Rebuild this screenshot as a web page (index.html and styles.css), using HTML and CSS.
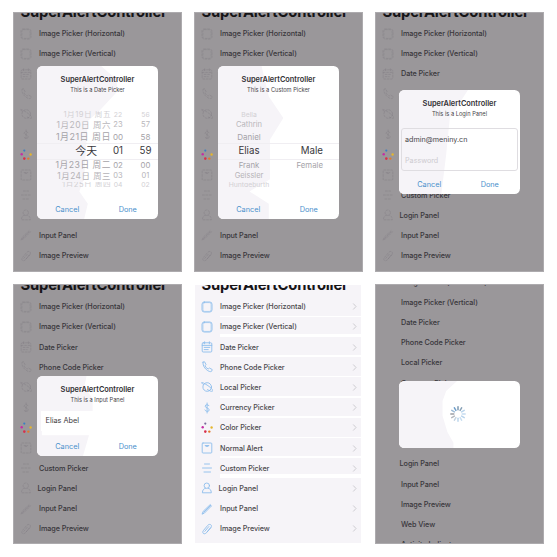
FILE: index.html
```
<!DOCTYPE html>
<html lang="en">
<head>
<meta charset="utf-8">
<title>SuperAlertController</title>
<link rel="stylesheet" href="styles.css">
</head>
<body>
<svg class="defs" aria-hidden="true">
  <symbol id="square" viewBox="0 0 12 12"><rect x="1" y="1" width="10" height="10" rx="2.2"/><rect x="2" y="1.600" width="8" height="8.800" rx="1.600" opacity=".6"/></symbol>
  <symbol id="calendar" viewBox="0 0 12 12"><rect x="1.2" y="1.8" width="9.6" height="9.2" rx="1"/><path d="M1.2 4.4h9.6M3.6.8v2M8.4.8v2M3.2 6.4h5.6M3.2 8.6h4"/></symbol>
  <symbol id="phone" viewBox="0 0 12 12"><path d="M2 1.2 3.6.8 5 3.6 4 4.8C4.600 6.300 5.700 7.400 7.200 8L8.400 7l2.800 1.500-.5 1.700C9 12.200 1 7 2 1.200Z"/></symbol>
  <symbol id="planet" viewBox="0 0 12 12"><circle cx="6.200" cy="6" r="4.300"/><path d="M2.500 3.800C-.5 1.200 0 .6 4 2.800S13.500 9.500 11.300 10.300C10.300 10.600 8.500 9.800 6.500 8.600"/></symbol>
  <symbol id="dollar" viewBox="0 0 12 12"><path d="M8 3.700C7.500 2.300 4.200 2.200 4.200 4.200S8.200 5.800 8.200 7.900 4.500 9.800 3.900 8M6.100 1v10"/></symbol>
  <symbol id="colors" viewBox="0 0 12 12"><g stroke="none"><circle class="dot-top" cx="4.300" cy="1.600" r="1.100"/><circle cx="1.700" cy="5.300" r="1.200" fill="#c52da4"/><circle cx="4.300" cy="9.600" r="1.300" fill="#d8304c"/><circle cx="8.300" cy="9.600" r="1.200" fill="#e07a2c"/><circle cx="10.600" cy="5.500" r="1.200" fill="#e5b52c"/></g></symbol>
  <symbol id="note" viewBox="0 0 12 12"><rect x="1.200" y="1" width="9.600" height="10" rx=".8"/><path d="M4.200 3.500h3.600M5 4.400h2"/></symbol>
  <symbol id="lines" viewBox="0 0 12 12"><path d="M3.500 2h5M1.500 6h9M3 10h6.500"/></symbol>
  <symbol id="person" viewBox="0 0 12 12"><circle cx="5.800" cy="3.700" r="2.700"/><path d="M4.500 6.200C2.500 6.800 1.500 8 1.400 10.800h8.900C10.200 8 9.200 6.800 7.200 6.200"/></symbol>
  <symbol id="pencil" viewBox="0 0 12 12"><path d="M1.200 10.800 2.200 8.300 9.200 1.600 10.500 2.900 3.700 9.800ZM2.800 9.200 9.700 2.300"/></symbol>
  <symbol id="clip" viewBox="0 0 12 12"><path d="M9.800 4.700 5.600 9.600C3.200 12.300.4 9.900 2.600 7.300L6.800 2.300C8.700.2 11.700 2.100 9.900 4.400L6 9M3.800 8.300 7.800 3.600"/></symbol>
  <symbol id="globe" viewBox="0 0 12 12"><circle cx="6" cy="6" r="4.800"/></symbol>
</svg>

<main class="gallery">
  <section class="screen dim">
    <h1 class="heading">SuperAlertController</h1>
    <div class="list" data-covered="2-9"></div>
    <div class="alert alert-picker shape-a">
      <h2>SuperAlertController</h2>
      <p class="sub">This is a Date Picker</p>
      <div class="wheel wheel-date">
        <div class="w0"><span>1月19日 周五</span><span>22</span><span>56</span></div>
        <div class="w1"><span>1月20日 周六</span><span>23</span><span>57</span></div>
        <div class="w2"><span>1月21日 周日</span><span>00</span><span>58</span></div>
        <div class="w3"><span>今天</span><span>01</span><span>59</span></div>
        <div class="w4"><span>1月23日 周二</span><span>02</span><span>00</span></div>
        <div class="w5"><span>1月24日 周三</span><span>03</span><span>01</span></div>
        <div class="w6"><span>1月25日 周四</span><span>04</span><span>02</span></div>
      </div>
      <div class="actions"><span>Cancel</span><span>Done</span></div>
    </div>
  </section>

  <section class="screen dim">
    <h1 class="heading">SuperAlertController</h1>
    <div class="list" data-covered="2-9"></div>
    <div class="alert alert-picker shape-b">
      <h2>SuperAlertController</h2>
      <p class="sub">This is a Custom Picker</p>
      <div class="wheel wheel-names">
        <div class="w0"><span>Bella</span></div>
        <div class="w1"><span>Cathrin</span></div>
        <div class="w2"><span>Daniel</span></div>
        <div class="w3"><span>Elias</span><span>Male</span></div>
        <div class="w4"><span>Frank</span><span>Female</span></div>
        <div class="w5"><span>Geissler</span></div>
        <div class="w6"><span>Huntgeburth</span></div>
      </div>
      <div class="actions"><span>Cancel</span><span>Done</span></div>
    </div>
  </section>

  <section class="screen dim">
    <h1 class="heading">SuperAlertController</h1>
    <div class="list" data-covered="3-7"></div>
    <div class="alert alert-login shape-c">
      <h2>SuperAlertController</h2>
      <p class="sub">This is a Login Panel</p>
      <div class="fields"><div>admin@meniny.cn</div><div class="placeholder">Password</div></div>
      <div class="actions"><span>Cancel</span><span>Done</span></div>
    </div>
  </section>

  <section class="screen dim lower">
    <h1 class="heading">SuperAlertController</h1>
    <div class="list" data-covered="4-7"></div>
    <div class="alert alert-input shape-d">
      <h2>SuperAlertController</h2>
      <p class="sub">This is a Input Panel</p>
      <div class="field">Elias Abel</div>
      <div class="actions"><span>Cancel</span><span>Done</span></div>
    </div>
  </section>

  <section class="screen plain lower">
    <h1 class="heading">SuperAlertController</h1>
    <div class="list"></div>
  </section>

  <section class="screen dim scrolled">
    <div class="list" data-covered="6-8"></div>
    <div class="alert alert-loading shape-e">
      <svg class="spinner" viewBox="-10 -10 20 20"></svg>
    </div>
  </section>
</main>
<script src="app.js"></script>
</body>
</html>
```

FILE: styles.css
```
* { box-sizing: border-box; margin: 0; padding: 0; }
body {
  width: 557px; height: 557px; overflow: hidden; background: #fff;
  font-family: Inter, "Noto Sans CJK SC", sans-serif; color: #3c3a3e;
}
.defs { position: absolute; width: 0; height: 0; }
.gallery {
  display: grid; grid-template-columns: repeat(3, 169px); grid-template-rows: repeat(2, 260px);
  gap: 12px; padding: 12px 0 0 13px;
}
.screen { position: relative; overflow: hidden; display: flex; flex-direction: column; }
.dim { --dot: #3b7fc4; background: #9a979a; border: 1px solid #adabae; }
.plain { --dot: #77699a; background: #f6f4f8; border: solid #fff; border-width: 1px 2px 1px 1px; }

.heading {
  height: 11.5px; flex: none; padding-left: 6.5px; margin-top: -1px;
  font-size: 14.8px; line-height: 0; font-weight: 700; letter-spacing: -0.2px;
  white-space: nowrap; color: #161517;
}
.lower .heading { height: 12.6px; padding-top: 1.3px; }
.scrolled .list { margin-top: -12.9px; }

.row {
  display: flex; align-items: center; flex: none; height: 20.2px; padding: 0 6px;
  font-size: 7.25px; font-weight: 500; letter-spacing: -0.08px; white-space: nowrap; color: #38363a;
}
.row svg { width: 12px; height: 12px; flex: none; fill: none; stroke-linecap: round; stroke-linejoin: round; }
.row .label { margin-left: 7px; flex: 1; }
.row.login .label { margin-left: 5.6px; }
.row .chevron { display: none; }
.dim .row svg { stroke: #7d7a80; stroke-width: 0.4; stroke-dasharray: 1.8 1.6; }
.dot-top { fill: var(--dot); }
.plain .row { padding: 0 4px 0 6px; color: #4c4a4e; position: relative; }
.plain .row .icon { stroke: #8dbdec; stroke-width: 0.9; }
.plain .row .chevron { display: block; width: 5px; height: 7px; stroke: #c3c1c7; stroke-width: 0.8; }
.plain .row::after {
  content: ""; position: absolute; left: 25px; right: 0; bottom: 0;
  height: var(--rule, 1px); background: #fff;
}
.scrolled .icon { visibility: hidden; }

.alert {
  position: absolute; left: 23px; width: 121px; border-radius: 5.5px;
  background: #fff; overflow: hidden; display: flex; flex-direction: column; isolation: isolate;
}
.alert::before { content: ""; position: absolute; inset: 0; z-index: -1; background: #f6f4f8; }
.alert-picker { top: 53px; height: 153px; }
.alert-login { top: 77px; height: 104px; }
.alert-input { top: 91px; height: 80px; }
.alert-loading { top: 96px; height: 67px; align-items: center; justify-content: center; }
.shape-a::before { clip-path: polygon(0 0, 53% 0, 66% 9%, 66% 17%, 52% 29%, 42% 36%, 39% 73%, 35% 82%, 42% 90%, 39% 100%, 0 100%); }
.shape-b::before { clip-path: polygon(0 0, 36% 0, 42% 20%, 54% 34%, 43% 48%, 43% 74%, 26% 82%, 42% 90%, 42% 100%, 0 100%); }
.shape-c::before { clip-path: polygon(0 0, 57% 0, 42% 27%, 39% 62%, 35% 100%, 0 100%); }
.shape-d::before { clip-path: polygon(0 0, 41% 0, 39% 14%, 46% 28%, 46% 44%, 4% 44%, 4% 74%, 43% 74%, 38% 100%, 0 100%); }
.shape-e::before { clip-path: polygon(0 0, 48% 0, 39% 15%, 36% 30%, 36% 52%, 40% 76%, 45% 92%, 45% 100%, 0 100%); }

.alert h2 {
  margin-top: 9px; font-size: 7.4px; line-height: 10px; font-weight: 600;
  text-align: center; color: #343236; white-space: nowrap;
}
.sub { font-size: 5.7px; line-height: 9px; text-align: center; color: #48464a; white-space: nowrap; }
.actions {
  display: grid; grid-template-columns: 1fr 1fr; margin-top: auto; height: 19px; line-height: 19px;
  font-size: 7.3px; text-align: center; color: #4a90cc;
}

.wheel { margin-top: 17px; white-space: nowrap; }
.wheel > div { display: grid; overflow: hidden; align-items: center; }
.wheel-date > div { grid-template-columns: 74px 14px 33px; }
.wheel-date span { text-align: center; }
.wheel-date span:last-child { padding-left: 8px; }
.wheel-date span:first-child { text-align: right; font-size: 1.12em; letter-spacing: 0.5px; }
.wheel-date .w3 span:first-child { padding-right: 14px; letter-spacing: 0; }
.wheel-names > div { grid-template-columns: 62px 44px 15px; }
.wheel-names span { text-align: center; }
.wheel-names span + span { text-align: right; padding-right: 1px; }
.wheel .w0 { height: 8px; font-size: 6.8px; line-height: 6px; color: #d2d0d4; }
.wheel .w1 { height: 11px; font-size: 7.6px; line-height: 10px; color: #b9b7bb; }
.wheel .w2 { height: 13px; font-size: 8px; line-height: 12px; color: #a5a3a8; }
.wheel .w3 {
  height: 17px; font-size: 9.7px; line-height: 14px; color: #3a383c; padding-bottom: 1px;
  border: solid #f0eef2; border-width: 1px 0;
}
.wheel .w4 { height: 10px; font-size: 7.8px; line-height: 10px; color: #a5a3a8; }
.wheel .w5 { height: 12px; font-size: 7.5px; line-height: 12px; color: #b5b3b7; }
.wheel .w6 { height: 5px; font-size: 6.8px; line-height: 6px; color: #d2d0d4; }

.fields { margin: 10px 2px 0; height: 43px; border: 1px solid #dfdde1; border-radius: 3px; }
.fields div { height: 21px; line-height: 21px; padding-left: 3px; font-size: 7.2px; color: #48464a; }
.fields .placeholder { color: #cdcbd0; }
.field { margin: 7px 4px 0; height: 20px; line-height: 20px; padding-left: 4.5px; font-size: 7.3px; background: #fff; }

.spinner { width: 20px; height: 20px; margin: 0 0 2px -3px; stroke-width: 1.5; stroke-linecap: round; }
```

FILE: app.js
```
const rows = [
  ['Image Picker (Horizontal)', 'square', 1], ['Image Picker (Vertical)', 'square', 3],
  ['Date Picker', 'calendar', 2], ['Phone Code Picker', 'phone', 1],
  ['Local Picker', 'planet', 2], ['Currency Picker', 'dollar', 2],
  ['Color Picker', 'colors', 1], ['Normal Alert', 'note', 2],
  ['Custom Picker', 'lines', 4], ['Login Panel', 'person', 0],
  ['Input Panel', 'pencil', 0], ['Image Preview', 'clip', 0],
  ['Web View', 'globe', 0], ['Activity Indicator', 'globe', 0]
];
for (const list of document.querySelectorAll('.list')) {
  const [from, to] = (list.dataset.covered || '99-99').split('-').map(Number);
  list.innerHTML = rows
    .slice(0, list.parentElement.classList.contains('scrolled') ? 14 : 12)
    .map(([label, icon, rule], i) =>
      `<div class="row${label === 'Login Panel' ? ' login' : ''}" style="--rule:${rule}px">` +
      `<svg class="icon"><use href="#${icon}"/></svg><span class="label">${i >= from && i <= to ? '' : label}</span>` +
      `<svg class="chevron" viewBox="0 0 5 7"><path d="M1.500 .8 4 3.500 1.500 6.200"/></svg></div>`)
    .join('');
}
const tones = ['#7d98b0', '#8aa3b8', '#b9d4ec', '#c6dcf0', '#b9d4ec', '#c9def0', '#bcd6ec', '#c4d4e2', '#b4b8be', '#9c9ea4', '#9dbbd6', '#6f9fca'];
document.querySelector('.spinner').innerHTML = tones
  .map((c, i) => `<path stroke="${c}" transform="rotate(${i * 30})" d="M0-4.200V-7.200"/>`)
  .join('');
```
